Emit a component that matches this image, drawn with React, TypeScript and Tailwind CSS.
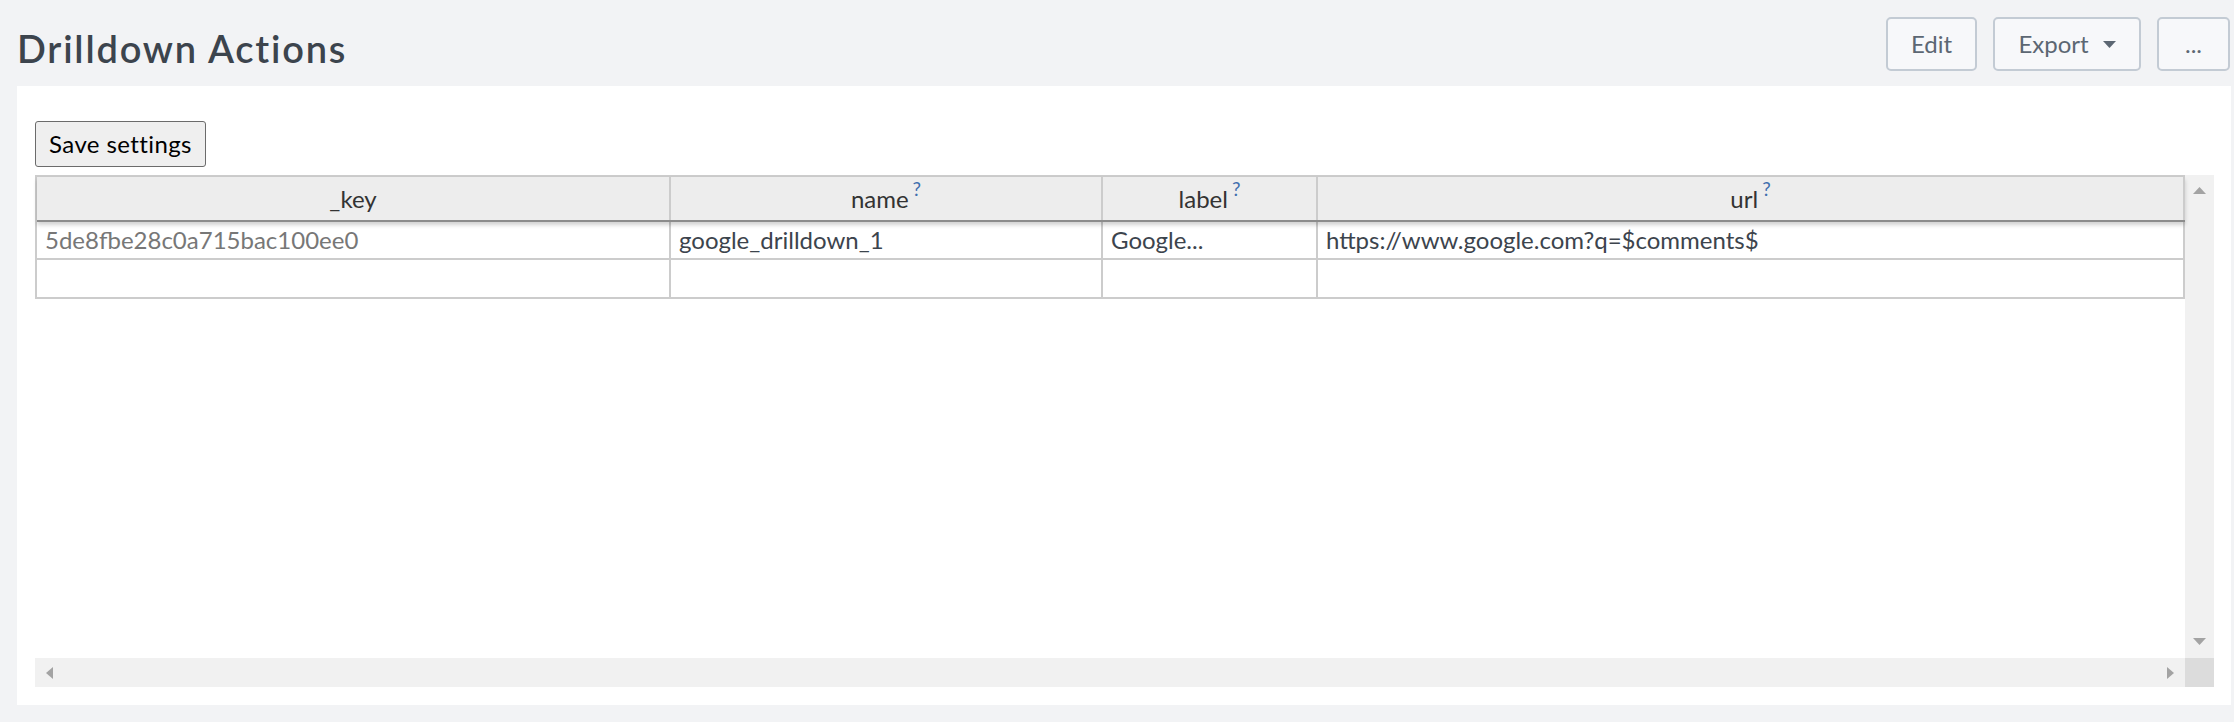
import React from "react";

interface Column {
  title: string;
  width: string;
  help: boolean;
}

const columns: Column[] = [
  { title: "_key", width: "w-[634px]", help: false },
  { title: "name", width: "w-[432px]", help: true },
  { title: "label", width: "w-[215px]", help: true },
  { title: "url", width: "w-[867px]", help: true },
];

const rows = [
  ["5de8fbe28c0a715bac100ee0", "google_drilldown_1", "Google...", "https://www.google.com?q=$comments$"],
  ["", "", "", ""],
];

const Arrow = ({ dir }: { dir: "up" | "down" | "left" | "right" }) => {
  const pts = {
    up: "0,7 6.5,0 13,7",
    down: "0,0 13,0 6.5,7",
    left: "7,0 7,12 0,6",
    right: "0,0 0,12 7,6",
  }[dir];
  const vertical = dir === "up" || dir === "down";
  return (
    <svg width={vertical ? 13 : 7} height={vertical ? 7 : 12} viewBox={vertical ? "0 0 13 7" : "0 0 7 12"}>
      <polygon points={pts} fill="#a3a3a3" />
    </svg>
  );
};

const App = () => {
  return (
    <div className="min-h-screen w-[2234px] bg-[#f2f3f5] font-['Lato',sans-serif]">
      <div className="flex items-start justify-between pl-[17px] pr-[4px] pt-[17px] h-[86px]">
        <h1 className="mt-[12px] text-[38px] leading-none font-semibold tracking-[1.8px] text-[#3c444d]">
          Drilldown Actions
        </h1>
        <div className="flex gap-[16px]">
          <button className="w-[91px] h-[54px] rounded-[5px] border-2 border-[#c3cbd4] bg-[#f7f8fa] text-[24px] text-[#5c6773]">
            Edit
          </button>
          <button className="w-[148px] h-[54px] rounded-[5px] border-2 border-[#c3cbd4] bg-[#f7f8fa] text-[24px] text-[#5c6773] flex items-center justify-center gap-[14px]">
            <span>Export</span>
            <svg width="13" height="7" viewBox="0 0 13 7">
              <polygon points="0,0 13,0 6.5,7" fill="#5c6773" />
            </svg>
          </button>
          <button className="w-[73px] h-[54px] rounded-[5px] border-2 border-[#c3cbd4] bg-[#f7f8fa] text-[24px] text-[#5c6773]">
            ...
          </button>
        </div>
      </div>

      <div className="ml-[17px] w-[2214px] bg-white px-[18px] pt-[35px] pb-[18px]">
        <button className="w-[171px] h-[46px] rounded-[3px] border border-[#6b6b6b] bg-[#efefef] text-[24px] tracking-[0.4px] text-black">
          Save settings
        </button>

        <div className="mt-[8px] flex flex-col w-[2179px] h-[512px]">
          <div className="flex h-[483px]">
            <div className="w-[2150px] bg-white">
              <div className="border-t-2 border-l-2 border-[#cccccc] w-[2150px]">
                <div className="relative z-10 flex h-[45px] bg-[#ededed] border-b-2 border-[#8c8c8c] shadow-[0_3px_4px_rgba(0,0,0,0.18)]">
                  {columns.map((col) => (
                    <div
                      key={col.title}
                      className={`${col.width} h-full border-r-2 border-[#cccccc] flex items-center justify-center text-[24px] text-[#333333]`}
                    >
                      <span>{col.title}</span>
                      {col.help && (
                        <span className="ml-[4px] relative -top-[9px] text-[19px] text-[#3f6fae]">?</span>
                      )}
                    </div>
                  ))}
                </div>
                {rows.map((row, i) => (
                  <div key={i} className={`flex ${i === 0 ? "h-[38px]" : "h-[39px]"} border-b-2 border-[#cccccc]`}>
                    {row.map((cell, j) => (
                      <div
                        key={j}
                        className={`${columns[j].width} h-full border-r-2 border-[#cccccc] flex items-center pl-[8px] text-[24px] whitespace-nowrap overflow-hidden ${
                          j === 0 ? "text-[#777777]" : "text-[#3c444d]"
                        }`}
                      >
                        {cell}
                      </div>
                    ))}
                  </div>
                ))}
              </div>
            </div>
            <div className="w-[29px] bg-[#f1f1f1] flex flex-col items-center justify-between pt-[12px] pb-[13px]">
              <Arrow dir="up" />
              <Arrow dir="down" />
            </div>
          </div>
          <div className="flex h-[29px]">
            <div className="w-[2150px] bg-[#f1f1f1] flex items-center justify-between pl-[11px] pr-[11px]">
              <Arrow dir="left" />
              <Arrow dir="right" />
            </div>
            <div className="w-[29px] bg-[#dcdcdc]" />
          </div>
        </div>
      </div>
    </div>
  );
};

export default App;
